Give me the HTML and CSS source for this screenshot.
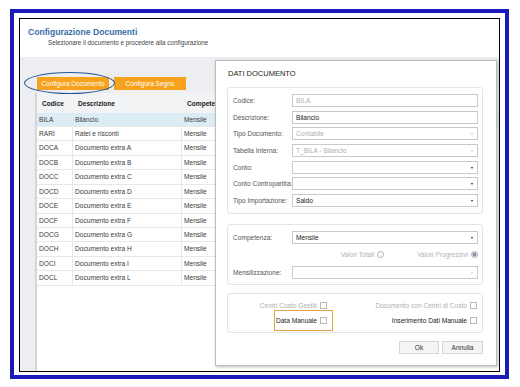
FILE: index.html
```html
<!DOCTYPE html>
<html>
	<head>
		<title>Configurazione Documenti</title>
		<meta charset="UTF-8">
		<link rel="stylesheet" href="styles.css">
	</head>
	<body>
		<div class="frame">
			<div class="screen">
				<header class="top">
					<h1>Configurazione Documenti</h1>
					<p>Selezionare il documento e procedere alla configurazione</p>
				</header>
				<div class="work">
					<div class="actions">
						<span class="btn">Configura Documento</span>
						<span class="btn">Configura Segno</span>
					</div>
					<div class="grid">
						<div class="row head"><span>Codice</span><span>Descrizione</span><span>Competenza</span><span></span></div>
						<div class="row sel"><span>BILA</span><span>Bilancio</span><span>Mensile</span><span></span></div>
						<div class="row"><span>RARI</span><span>Ratei e risconti</span><span>Mensile</span><span></span></div>
						<div class="row"><span>DOCA</span><span>Documento extra A</span><span>Mensile</span><span></span></div>
						<div class="row"><span>DOCB</span><span>Documento extra B</span><span>Mensile</span><span></span></div>
						<div class="row"><span>DOCC</span><span>Documento extra C</span><span>Mensile</span><span></span></div>
						<div class="row"><span>DOCD</span><span>Documento extra D</span><span>Mensile</span><span></span></div>
						<div class="row"><span>DOCE</span><span>Documento extra E</span><span>Mensile</span><span></span></div>
						<div class="row"><span>DOCF</span><span>Documento extra F</span><span>Mensile</span><span></span></div>
						<div class="row"><span>DOCG</span><span>Documento extra G</span><span>Mensile</span><span></span></div>
						<div class="row"><span>DOCH</span><span>Documento extra H</span><span>Mensile</span><span></span></div>
						<div class="row"><span>DOCI</span><span>Documento extra I</span><span>Mensile</span><span></span></div>
						<div class="row"><span>DOCL</span><span>Documento extra L</span><span>Mensile</span><span></span></div>
					</div>
				</div>

				<!-- annotation round the first button -->
				<span class="mark"></span>

				<div class="dialog">
					<h2>DATI DOCUMENTO</h2>
					<div class="box first">
						<div class="fields">
							<label>Codice:</label><div class="field off">BILA</div>
							<label>Descrizione:</label><div class="field">Bilancio</div>
							<label>Tipo Documento:</label><div class="field off select">Contabile</div>
							<label>Tabella Interna:</label><div class="field off select">T_BILA - Bilancio</div>
							<label>Conto:</label><div class="field select"></div>
							<label>Conto Contropartita:</label><div class="field select"></div>
							<label>Tipo Importazione:</label><div class="field select">Saldo</div>
						</div>
					</div>
					<div class="box">
						<div class="fields tight">
							<label>Competenza:</label><div class="field select">Mensile</div>
							<div class="radios">
								<span class="radio">Valori Totali <i></i></span>
								<span class="radio on">Valori Progressivi <i></i></span>
							</div>
							<label>Mensilizzazione:</label><div class="field off select"></div>
						</div>
					</div>
					<div class="box">
						<div class="checks">
							<span class="check off">Centri Costo Gestiti <i></i></span>
							<span class="check off">Documento con Centri di Costo <i></i></span>
							<span class="check marked">Data Manuale <i></i></span>
							<span class="check">Inserimento Dati Manuale <i></i></span>
						</div>
					</div>
					<div class="buttons">
						<span class="b">Ok</span>
						<span class="b wide">Annulla</span>
					</div>
				</div>
			</div>
		</div>
	</body>
</html>
```

FILE: styles.css
```css
/*Page*/
body{
	margin: 0;
	background: #fff;
	font-family: "Liberation Sans", Arial, sans-serif;
	font-size: 6.6px;
	color: #333;
}
.frame{
	width: 499px;
	height: 370px;
	margin: 9px 0 0 10px;
	padding: 5px 5px 3px 5px;
	border: 4px solid #1a1ab8;
	box-sizing: border-box;
}
.screen{
	position: relative;
	height: 100%;
	border: 1px solid #000;
	box-sizing: border-box;
	display: flex;
	flex-direction: column;
	overflow: hidden;
	background: #fff;
}

/*Header*/
.top{
	height: 38px;
	padding: 8px 0 0 8px;
	box-sizing: border-box;
}
.top h1{
	margin: 0;
	font-size: 8.6px;
	line-height: 10px;
	color: #3a6ea8;
}
.top p{
	margin: 2px 0 0 20px;
	font-size: 6.3px;
	line-height: 8px;
	color: #444;
}

/*Work area*/
.work{
	flex: 1;
	display: flex;
	flex-direction: column;
	padding: 20px 0 0 15px;
	background: #eceef1;
}
.actions{
	display: flex;
	gap: 5px;
	margin: 0 0 3px 2px;
}
.btn{
	width: 72px;
	height: 13px;
	line-height: 13px;
	text-align: center;
	background: #f6a21c;
	color: #fff;
	font-size: 6.5px;
}
.mark{
	position: absolute;
	left: 4px;
	top: 53px;
	width: 91px;
	height: 22px;
	border: 1px solid #22569a;
	border-radius: 50%;
	box-sizing: border-box;
}

/*Grid*/
.grid{
	flex: 1;
	background: #fff;
	border-left: 2px solid #d3d6da;
}
.row{
	display: grid;
	grid-template-columns: 36px 109px 110px 1fr;
	height: 14.45px;
	border-bottom: 1px solid #e8e8e8;
	box-sizing: border-box;
	align-items: center;
	color: #3a3a3a;
}
.row span{
	height: 100%;
	line-height: 13.45px;
	padding-left: 2px;
	border-right: 1px solid #e8e8e8;
	white-space: nowrap;
	overflow: hidden;
}
.row.head{
	height: 19.5px;
	background: #f2f3f5;
	font-weight: bold;
	color: #222;
	border-bottom: none;
}
.row.head span{
	line-height: 21px;
	padding-left: 5px;
	border-right: none;
}
.row.sel{
	background: #dcecf5;
}

/*Dialog*/
.dialog{
	position: absolute;
	left: 195px;
	top: 41px;
	width: 282px;
	height: 306px;
	box-sizing: border-box;
	padding: 8px 13px 0 11px;
	border: 1px solid #bdbdbd;
	background: #fff;
	box-shadow: 1px 1px 3px rgba(0,0,0,0.25);
}
.dialog h2{
	margin: 0 0 9px 1px;
	font-size: 7.5px;
	line-height: 9px;
	font-weight: normal;
	color: #222;
}
.box{
	border: 1px solid #e4e4e4;
	border-radius: 3px;
	margin-bottom: 8px;
}
.box.first{
	margin-bottom: 10px;
}
.fields{
	display: grid;
	grid-template-columns: 59px 1fr;
	row-gap: 3.67px;
	align-items: center;
	padding: 6px 4px 6px 5px;
}
.fields.tight{
	row-gap: 0;
	padding-bottom: 5px;
}
.fields label{
	color: #555;
	white-space: nowrap;
}
.field{
	position: relative;
	height: 13px;
	line-height: 11px;
	padding-left: 3px;
	border: 1px solid #c9c9c9;
	box-sizing: border-box;
	background: #fff;
	color: #222;
}
.field.off{
	color: #b0b0b0;
}
.select::after{
	content: "";
	position: absolute;
	right: 4px;
	top: 5px;
	border-style: solid;
	border-width: 2px 1.5px 0;
	border-color: #222 transparent transparent;
}
.off.select::after{
	border-top-color: #c8c8c8;
}
.radios{
	grid-column: 1 / -1;
	height: 22px;
	display: flex;
	justify-content: flex-end;
	align-items: center;
	gap: 33px;
}
.radio{
	display: inline-flex;
	align-items: center;
	gap: 3px;
	color: #b3b3b3;
}
.radio i{
	width: 7px;
	height: 7px;
	border: 1px solid #b0b0b0;
	border-radius: 50%;
	box-sizing: border-box;
	background: #fff;
}
.radio.on i{
	border-color: #a9acbc;
	background: radial-gradient(circle, #8a8fa8 0 1.4px, #d6d9e4 2px);
}
.checks{
	display: grid;
	grid-template-columns: 94px 1fr;
	row-gap: 5px;
	padding: 7px 5px 6px 5px;
}
.check{
	position: relative;
	justify-self: end;
	display: flex;
	align-items: center;
	gap: 3px;
	height: 10px;
	color: #222;
	white-space: nowrap;
}
.check.off{
	color: #b0b0b0;
}
.check i{
	width: 7px;
	height: 7px;
	border: 1px solid #b9b9b9;
	box-sizing: border-box;
	background: #fff;
}
.check.marked::after{
	content: "";
	position: absolute;
	left: -2px;
	right: -6px;
	top: -6px;
	bottom: -5px;
	border: 1px solid #e6a04a;
}
.buttons{
	display: flex;
	justify-content: flex-end;
	gap: 3px;
}
.b{
	width: 40px;
	height: 13px;
	line-height: 11px;
	text-align: center;
	border: 1px solid #d6d6d6;
	background: #f4f4f4;
	box-sizing: border-box;
	color: #333;
}
.b.wide{
	width: 41px;
}
```
